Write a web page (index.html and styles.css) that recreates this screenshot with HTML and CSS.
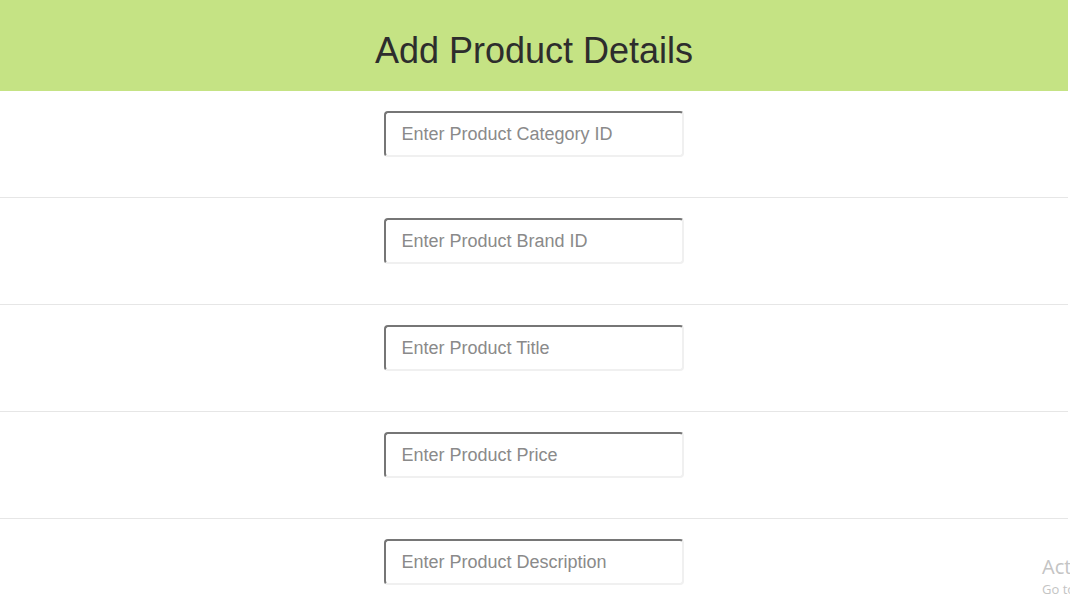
FILE: index.html
```html
<!DOCTYPE html>
<html>
<head>
<meta charset="utf-8">
<link rel="stylesheet" href="styles.css">
</head>
<body>
<div class="page">
  <header class="banner"><h1>Add Product Details</h1></header>
  <form class="form">
    <div class="row"><input class="field" type="text" placeholder="Enter Product Category ID"></div>
    <div class="row"><input class="field" type="text" placeholder="Enter Product Brand ID"></div>
    <div class="row"><input class="field" type="text" placeholder="Enter Product Title"></div>
    <div class="row"><input class="field" type="text" placeholder="Enter Product Price"></div>
    <div class="row"><input class="field" type="text" placeholder="Enter Product Description"></div>
  </form>
</div>
<div class="watermark">
  <div class="wm-title">Activate Windows</div>
  <div class="wm-sub">Go to Settings to activate Windows.</div>
</div>
</body>
</html>
```
FILE: styles.css
```css
html, body {
  margin: 0;
  padding: 0;
  background: #ffffff;
  overflow: hidden;
}
body {
  font-family: "Liberation Sans", Arial, sans-serif;
  color: #333333;
}
.page {
  width: 1068px;
}
.banner {
  background: #c5e384;
  height: 91px;
  box-sizing: border-box;
  padding-top: 10px;
  display: flex;
  align-items: center;
  justify-content: center;
}
.banner h1 {
  margin: 0;
  font-weight: 400;
  font-size: 36px;
  color: #2d2d2d;
}
.form {
  margin: 0;
}
.row {
  display: flex;
  justify-content: center;
  padding: 20px 0 40px 0;
  border-bottom: 1px solid #e6e6e6;
}
.field {
  box-sizing: border-box;
  width: 300px;
  height: 46px;
  margin-left: -1px;
  border-width: 2px;
  border-style: solid;
  border-color: #767676 #f0f0f0 #f0f0f0 #767676;
  border-radius: 4px;
  padding: 0 16px;
  font-family: "Liberation Sans", Arial, sans-serif;
  font-size: 18px;
  color: #333;
  background: #fff;
  outline: none;
}
.field::placeholder {
  color: #8a8a8a;
  opacity: 1;
}
.watermark {
  position: absolute;
  left: 1042px;
  top: 553px;
  white-space: nowrap;
  font-family: "Open Sans", "Noto Sans", sans-serif;
  color: #c4c4c4;
}
.wm-title {
  font-size: 20px;
  line-height: 27px;
}
.wm-sub {
  font-size: 13px;
  line-height: 18px;
}
```
